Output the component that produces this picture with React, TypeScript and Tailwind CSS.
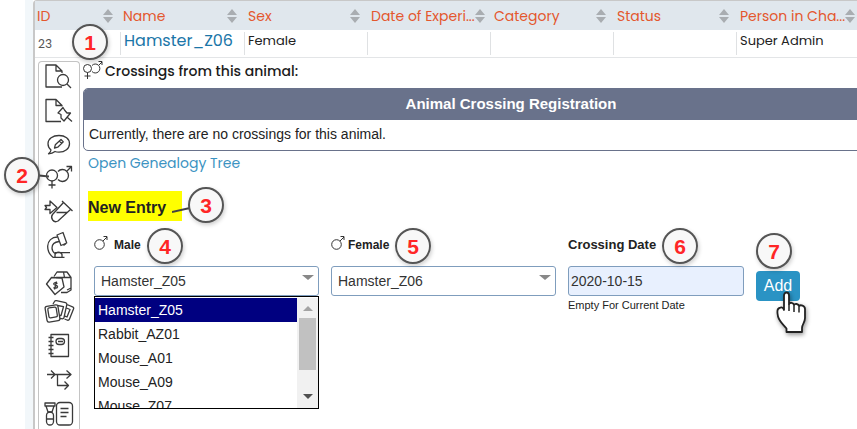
import React from "react";

const poppins =
  "font-[Poppins,Inter,'Open_Sans',sans-serif] [font-feature-settings:'cv11','ss03']";
const arial = "font-['Liberation_Sans',Arial,sans-serif]";

function SortIcon() {
  return (
    <svg width="10" height="14" viewBox="0 0 10 14" className="shrink-0 fill-[#a9adb1]" aria-hidden="true">
      <path d="M0 6 5 0l5 6zM0 8h10l-5 6z" />
    </svg>
  );
}

const columns = [
  { title: "ID", width: "w-[85px]", pad: "pl-[2px]" },
  { title: "Name", width: "w-[124px]", pad: "pl-[3px]" },
  { title: "Sex", width: "w-[123px]", pad: "pl-1" },
  { title: "Date of Experi...", width: "w-[123px]", pad: "pl-1" },
  { title: "Category", width: "w-[123px]", pad: "pl-1" },
  { title: "Status", width: "w-[123px]", pad: "pl-1" },
  { title: "Person in Cha...", width: "", pad: "pl-1" },
];

function AnimalTable() {
  const cell = "h-[23px] border-l border-[#dfe1e3] pl-[3px] leading-[18px] text-[13px] text-[#222]";
  return (
    <table className={`w-full table-fixed border-separate border-spacing-0 ${poppins}`}>
      <thead>
        <tr className="bg-[#e0e7ed]">
          {columns.map((c) => (
            <th key={c.title} className={`h-[29px] p-0 text-left font-normal ${c.width}`}>
              <div className={`flex items-center justify-between pr-[7px] ${c.pad}`}>
                <span className="whitespace-nowrap text-[14px] leading-5 text-[#e4572e]">{c.title}</span>
                <SortIcon />
              </div>
            </th>
          ))}
        </tr>
      </thead>
      <tbody>
        <tr>
          <td className="h-[28px] border-b border-[#e3e5e7] p-0 pl-[3px] text-[12px] text-[#555]">23</td>
          {["Hamster_Z06", "Female", "", "", "", "Super Admin"].map((v, i) => (
            <td key={i} className="border-b border-[#e3e5e7] p-0 align-middle">
              <div className={cell}>
                {i === 0 ? (
                  <a href="#animal" className="text-[16px] text-[#1b76a8]">{v}</a>
                ) : (
                  v
                )}
              </div>
            </td>
          ))}
        </tr>
      </tbody>
    </table>
  );
}

const tools: { name: string; art: React.ReactNode }[] = [
  {
    name: "Details",
    art: (
      <>
        <path d="M23 27H7V5h10l6 6v2M17 5v6h6" />
        <circle cx="24" cy="20" r="5.5" />
        <path d="m28 24 4 4" />
      </>
    ),
  },
  {
    name: "Pin",
    art: (
      <>
        <path d="M22 27.500H7V5.500h10l6 6v1M17 5.500v6h6" />
        <path d="M24 13.500 19 19l3 1.500V24l3 3 6.500-8h-3.500L25.500 16zM28.500 23.500l4.500 4" />
      </>
    ),
  },
  {
    name: "Comment",
    art: (
      <>
        <path d="M12 22c-2-1.600-3-3.800-3-6.200C9 11 13.700 7.500 20 7.500S30.500 11 30.500 15.800 26 24.200 20 24.200c-1.500 0-3-.2-4-.7-2 1.700-4 2.300-6.500 2.300 1.500-1 2.300-2.300 2.500-3.800z" />
        <path d="m15.500 20 .800-3.200 5.700-5.300 2.300 2.400-5.600 5.300zM20.300 13l2.400 2.400" />
      </>
    ),
  },
  {
    name: "Crossings",
    art: (
      <>
        <circle cx="13" cy="13.500" r="5.500" />
        <path d="M13 19v7.500M9.500 23h7M19 9.500a6 6 0 1 1 0 8M28 9l4.500-4.500M27.500 4.500h5v5" />
      </>
    ),
  },
  {
    name: "Samples",
    art: (
      <>
        <path d="M6 9.500h5V5l7 6.500-7 6v-4H6l1.500-2z" />
        <path d="m23 5 10.500 10M24.500 6.500l-11 12c-2.500 3.500 1 9 5.500 6.500l13-12M17.500 16.500H28" />
      </>
    ),
  },
  {
    name: "Analysis",
    art: (
      <>
        <path d="m18 5 6-2.500 3.700 10.500-5.700 2.500z" />
        <path d="M18.500 7c-6 0-9.500 4-9.800 9-.2 4.500 2 8.500 5.300 11.300h11.500M20 11.500c-4.500.5-7 3-7 6.500 0 2.500 1 4 3 5.500M16 27v-2.500c1-3 6-3 7 0V27M16 22.700h15M27 13.500l-2.500 2" />
      </>
    ),
  },
  {
    name: "Price",
    art: (
      <>
        <path d="m15 12.500 3-4.500h10l4 5.500V26l-4 2.500h-6M17 13.500h15M24.500 8l1 5.500M32 24l-4 2" />
        <path d="m7.500 20 5-6.500L23 14l2 9-9 7.500z" />
        <path d="M18.500 19.500c-2-1.500-4.500-.5-3.500 1s4 .5 3.500 2.500c-.5 1.500-3 1.500-4 .5M17.500 17.500l-2 8" />
      </>
    ),
  },
  {
    name: "Pictures",
    art: (
      <>
        <rect x="7" y="7.500" width="13" height="16" rx="2" transform="rotate(-9 13.500 15.500)" />
        <rect x="9.500" y="9.500" width="8.500" height="10" rx="1.500" transform="rotate(-9 13.500 15.500)" />
        <path d="m14 6 1.500-2.500c.5-1 1-1 2-.8l9 2c1.200.3 1.500 1 1.300 2L25 19.500c-.3 1.200-1 1.500-2.500 1.200L21 20.500M18.500 7.500l6 1.200L22 17.500h-1M28 6.500l5.500 2.300c1.200.5 1.500 1.200 1 2.300L30.500 21c-.5 1.200-1.500 1.500-2.500 1L25.500 21M27.500 10l3.500 1.500-3 7.500-2-.8" />
      </>
    ),
  },
  {
    name: "Notebook",
    art: (
      <>
        <rect x="12" y="2.500" width="17.500" height="22" />
        <path d="M9.500 5.500h5M9.500 9.500h5M9.500 13.500h5M9.500 17.500h5M9.500 21.500h5M19 9.500h5" />
        <rect x="17" y="6.500" width="8.500" height="6" rx="3" />
      </>
    ),
  },
  {
    name: "Workflow",
    art: <path d="M8 8.500h24M12 4.500l4 4-4 4M27.500 4.500l4.500 4-4.500 4M18.500 8.500v11h11M25.500 15.500l4 4-4 4" />,
  },
  {
    name: "Protocol",
    art: (
      <>
        <path d="M6 3h10v3h-1l-2 6H9L7 6H6zM7 6h8" />
        <rect x="7.500" y="12" width="7" height="13" rx="3.500" />
        <path d="M7.500 19h7M21.500 8.500h8M21.500 12.500h8M21.500 16.500h6" />
        <rect x="17.500" y="2.500" width="16" height="22.500" rx="3.500" />
      </>
    ),
  },
];

function Toolbar() {
  return (
    <nav className="mt-[3px] w-[42px] shrink-0 overflow-hidden rounded-t-[4px] border border-b-0 border-[#c4c4c4]">
      {tools.map((t) => (
        <button key={t.name} type="button" aria-label={t.name} className="-mt-[2px] mb-[2px] block h-[34px] w-full">
          <svg width="40" height="34" viewBox="0 0 40 34" className="fill-none stroke-[#3a3a3a] stroke-[1.3]" strokeLinejoin="round">
            {t.art}
          </svg>
        </button>
      ))}
    </nav>
  );
}

function MaleIcon() {
  return (
    <svg width="14" height="16" viewBox="0 0 14 16" className="-mt-1 fill-none stroke-[#333]" aria-hidden="true">
      <circle cx="5.500" cy="9.500" r="4.800" />
      <path d="m9 6 4-4M9.500 1.500H13V5" />
    </svg>
  );
}

function Marker({ n, place }: { n: number; place: string }) {
  return (
    <span
      className={`absolute flex size-9 items-center justify-center rounded-full border-2 border-[#555] bg-[#f8f8f8] text-[21px] font-bold leading-none text-[#ff2626] shadow-[1px_2px_4px_rgba(0,0,0,0.2)] ${arial} ${place}`}
    >
      {n}
    </span>
  );
}

const labelClass = "flex h-[18px] items-center text-[12px] font-bold text-[#222]";
const fieldClass = "h-[30px] w-full appearance-none rounded-[3px] border border-[#7f9dbd] text-[14px] text-[#333]";

function AnimalSelect({ id, label, value, gap }: { id: string; label: string; value: string; gap: string }) {
  return (
    <>
      <label htmlFor={id} className={`${labelClass} ${gap}`}>
        <MaleIcon />
        {label}
      </label>
      <div className="relative mt-3">
        <select id={id} defaultValue={value} className={`${fieldClass} bg-white pl-[6px]`}>
          <option>{value}</option>
        </select>
        <svg width="12" height="5" viewBox="0 0 12 5" className="pointer-events-none absolute right-[5px] top-[9px] fill-[#888]">
          <path d="M0 0h12L6 5z" />
        </svg>
      </div>
    </>
  );
}

function OptionList() {
  return (
    <div className="absolute inset-x-0 top-full flex h-[113px] border border-black bg-white pt-px">
      <ul role="listbox" aria-label="Male" className="grow overflow-hidden text-[14px] leading-6 text-[#222]">
        {["Hamster_Z05", "Rabbit_AZ01", "Mouse_A01", "Mouse_A09", "Mouse_Z07"].map((o, i) => (
          <li key={o} role="option" aria-selected={i === 0} className={`h-6 pl-[3px] ${i === 0 ? "bg-[#000080] text-white" : ""}`}>
            {o}
          </li>
        ))}
      </ul>
      <div className="flex w-[21px] flex-col items-center bg-[#f1f1f1]">
        <svg width="10" height="5" viewBox="0 0 10 5" className="mt-2 fill-[#a3a3a3]"><path d="M0 5h10L5 0z" /></svg>
        <div className="mt-[7px] h-[52px] w-[17px] bg-[#c1c1c1]" />
        <svg width="10" height="5" viewBox="0 0 10 5" className="mt-6 fill-[#505050]"><path d="M0 0h10L5 5z" /></svg>
      </div>
    </div>
  );
}

export default function App() {
  return (
    <div className={`relative flex h-screen overflow-hidden bg-white ${arial}`}>
      <div className="w-[25px] shrink-0" />
      <div className="w-2 shrink-0 bg-[#f2f7fa]" />
      <div className="flex min-w-0 grow flex-col rounded-tl-[4px] border-l-2 border-t border-[#c8c8c8]">
        <div className="-mr-[3px]">
          <AnimalTable />
        </div>
        <div className="flex min-h-0 grow pl-[3px]">
          <Toolbar />
          <main className="-mr-[82px] ml-[3px] grow">
            <h2 className={`flex h-[30px] items-center text-[14px] font-medium text-[#1c1c1c] ${poppins}`}>
              <svg width="22" height="20" viewBox="0 0 22 20" className="-mt-[6px] fill-none stroke-[#333]" aria-hidden="true">
                <circle cx="4.500" cy="8.500" r="4" />
                <path d="M4.500 12.500V19M1.500 16h6M9 5.500a4.500 4.500 0 1 1 0 6M16 5l3-3M15.500 1.500H19V5" />
              </svg>
              <span className="-mt-1">Crossings from this animal:</span>
            </h2>
            <section className="overflow-hidden rounded-[5px] border border-[#69728b]">
              <h3 className="flex h-[31px] items-center justify-center bg-[#69728b] text-[15px] font-bold text-white">
                Animal Crossing Registration
              </h3>
              <p className="flex h-[30px] items-center pb-px pl-[5px] text-[14px] text-[#222]">
                Currently, there are no crossings for this animal.
              </p>
            </section>
            <a href="#tree" className={`ml-[5px] mt-[2px] block w-fit text-[14px] leading-5 text-[#3c93c2] ${poppins}`}>
              Open Genealogy Tree
            </a>
            <div className="relative ml-[5px] mt-[18px] w-[94px]">
              <h3 className="flex h-[30px] items-center bg-[#ffff00] pt-1 text-[16px] font-bold text-[#222]">New Entry</h3>
              <svg width="18" height="6" viewBox="0 0 18 6" className="absolute -right-2 top-4 stroke-[#444] stroke-2">
                <path d="M0 5 18 1" />
              </svg>
            </div>
            <form className="ml-[11px] mt-[15px] flex gap-3">
              <div className="relative h-[60px] w-[225px]">
                <AnimalSelect id="male" label="Male" value="Hamster_Z05" gap="gap-[6px]" />
                <OptionList />
              </div>
              <div className="w-[225px]">
                <AnimalSelect id="female" label="Female" value="Hamster_Z06" gap="gap-[3px]" />
              </div>
              <div className="w-[176px]">
                <label htmlFor="date" className={`${labelClass} text-[13px]`}>Crossing Date</label>
                <input id="date" defaultValue="2020-10-15" className={`${fieldClass} mt-3 bg-[#e8f0fe] pl-[2px]`} />
                <p className="mt-px text-[11px] leading-4 text-[#222]">Empty For Current Date</p>
              </div>
              <button type="button" className="relative mt-[35px] h-[30px] w-11 rounded-[4px] bg-[#2a93c4] text-[16px] text-white">
                Add
                <svg width="34" height="44" viewBox="0 0 34 44" className="absolute left-[19px] top-5 drop-shadow-[1px_2px_2px_rgba(0,0,0,0.4)]" aria-hidden="true">
                  <path
                    d="M9 4.500C9 .500 14 .500 14 4.500V13c1-2 4.500-1.500 5 1 1-1.800 4.500-1.200 5 1 1.500-1.500 6-.5 6 3v9c0 5-3 6-3 10v4H11.500v-3.500c-3-4-7-6.500-8.500-12-1-4-1-8 1.500-8.500C7 15.500 8.500 17 9 19z"
                    fill="#fff"
                    stroke="#222"
                    strokeWidth="1.800"
                    strokeLinejoin="round"
                  />
                  <path d="M14 13v7M19 14.500V21M24 15.500v6" stroke="#222" strokeWidth="1.500" fill="none" />
                </svg>
              </button>
            </form>
          </main>
        </div>
      </div>
      <svg width="10" height="4" viewBox="0 0 10 4" className="absolute left-[39px] top-[174px] stroke-[#444] stroke-2">
        <path d="M0 1.500 10 2.500" />
      </svg>
      <Marker n={1} place="left-[72px] top-6" />
      <Marker n={2} place="left-1 top-[157px]" />
      <Marker n={3} place="left-[188px] top-[187px]" />
      <Marker n={4} place="left-[147px] top-[228px]" />
      <Marker n={5} place="left-[395px] top-[228px]" />
      <Marker n={6} place="left-[662px] top-[228px]" />
      <Marker n={7} place="left-[756px] top-[233px]" />
    </div>
  );
}
